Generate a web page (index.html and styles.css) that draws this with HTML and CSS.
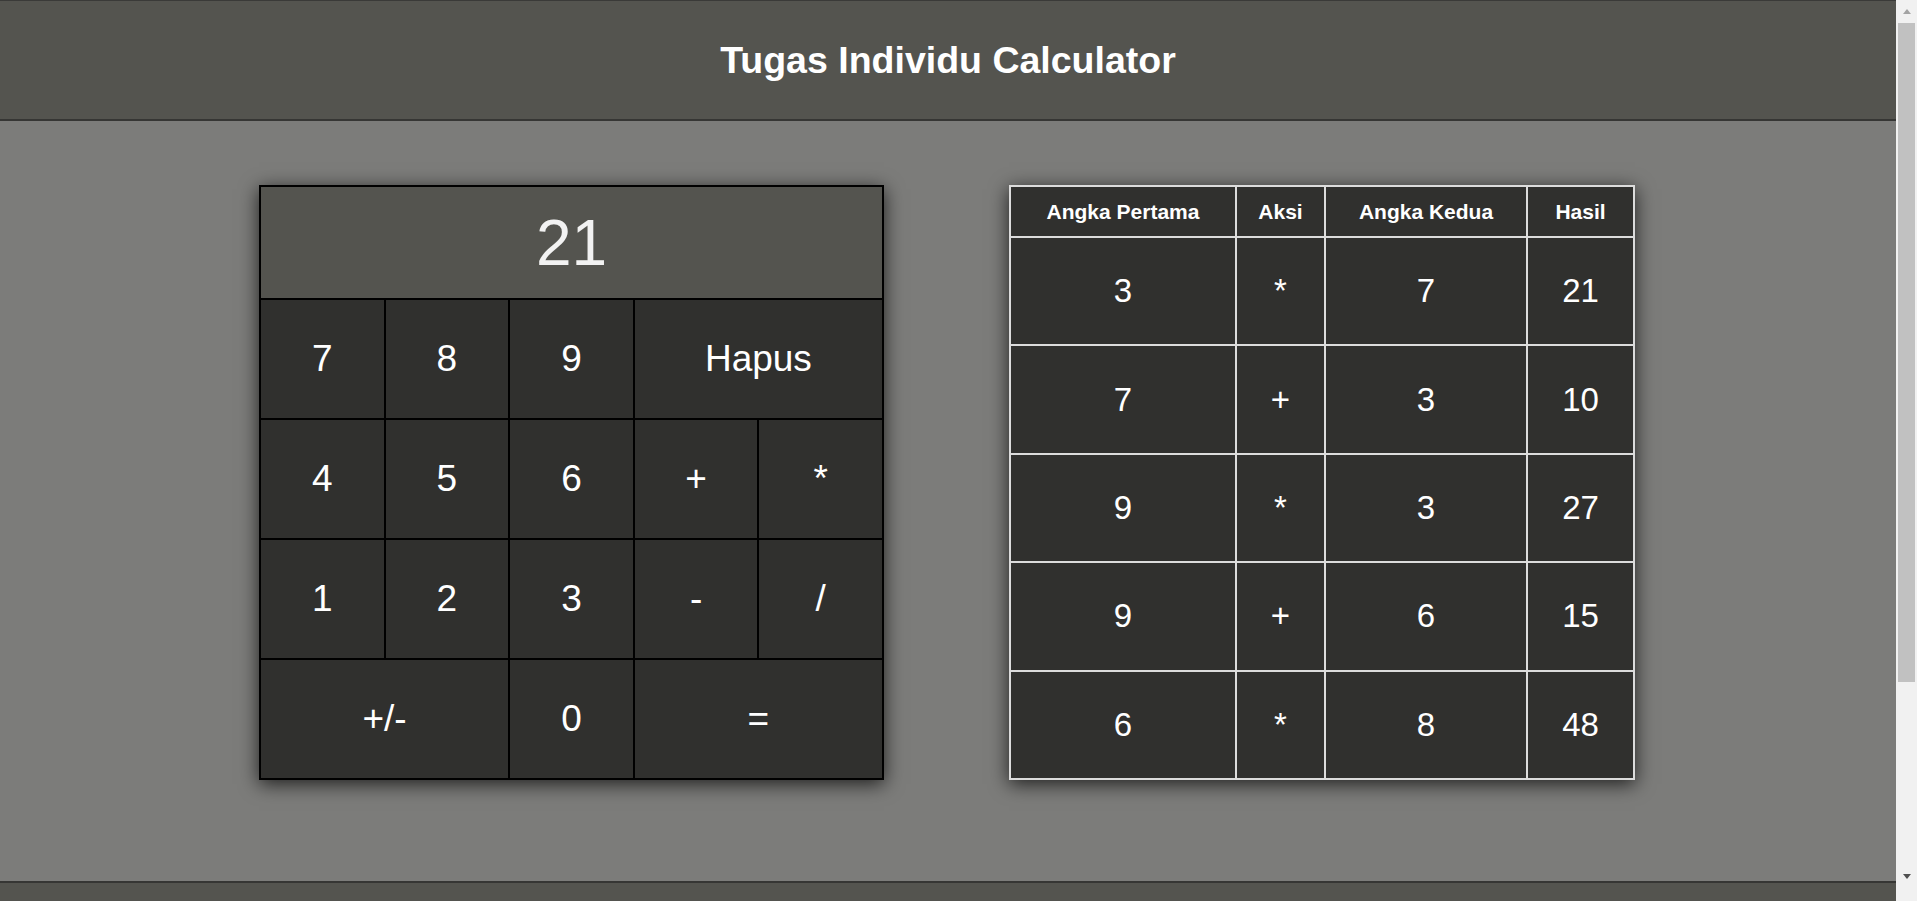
FILE: index.html
```html
<!DOCTYPE html>
<html lang="id">
<head>
<meta charset="utf-8">
<title>Tugas Individu Calculator</title>
<link rel="stylesheet" href="styles.css">
</head>
<body>
<header class="site-header">
  <h1 class="site-title">Tugas Individu Calculator</h1>
</header>
<main class="main">
  <div class="calc">
    <div class="calc-display">21</div>
    <button class="key">7</button>
    <button class="key">8</button>
    <button class="key">9</button>
    <button class="key key-wide">Hapus</button>
    <button class="key">4</button>
    <button class="key">5</button>
    <button class="key">6</button>
    <button class="key">+</button>
    <button class="key">*</button>
    <button class="key">1</button>
    <button class="key">2</button>
    <button class="key">3</button>
    <button class="key">-</button>
    <button class="key">/</button>
    <button class="key key-wide">+/-</button>
    <button class="key">0</button>
    <button class="key key-wide">=</button>
  </div>
  <table class="history">
    <colgroup>
      <col class="c1"><col class="c2"><col class="c3"><col class="c4">
    </colgroup>
    <thead>
      <tr>
        <th>Angka Pertama</th>
        <th>Aksi</th>
        <th>Angka Kedua</th>
        <th>Hasil</th>
      </tr>
    </thead>
    <tbody>
      <tr><td>3</td><td>*</td><td>7</td><td>21</td></tr>
      <tr><td>7</td><td>+</td><td>3</td><td>10</td></tr>
      <tr><td>9</td><td>*</td><td>3</td><td>27</td></tr>
      <tr><td>9</td><td>+</td><td>6</td><td>15</td></tr>
      <tr><td>6</td><td>*</td><td>8</td><td>48</td></tr>
    </tbody>
  </table>
</main>
<footer class="site-footer"></footer>
<div class="scrollbar" aria-hidden="true">
  <div class="sb-btn"><span class="sb-up"></span></div>
  <div class="sb-thumb"></div>
  <div class="sb-rest"></div>
  <div class="sb-btn"><span class="sb-down"></span></div>
</div>
</body>
</html>
```
FILE: styles.css
```css
html, body {
  margin: 0;
  padding: 0;
}
body {
  margin-right: 21px;
  font-family: "Liberation Sans", Arial, sans-serif;
  background: #7c7c7a;
  color: #fff;
}
.site-header {
  background: #54544f;
  border-top: 1px solid #3a3a38;
  border-bottom: 2px solid #363634;
  height: 118px;
  display: flex;
  align-items: center;
  justify-content: center;
}
.site-title {
  margin: 0;
  font-size: 37.5px;
  font-weight: bold;
  color: #fff;
}
.main {
  display: flex;
  align-items: flex-start;
  gap: 125px;
  padding: 64px 0 0 259px;
  height: 696px;
  background: #7c7c7a;
}
.calc {
  width: 625px;
  box-sizing: border-box;
  border: 2px solid #000;
  background: #000;
  display: grid;
  grid-template-columns: repeat(5, 1fr);
  grid-template-rows: 111px repeat(4, 118px);
  gap: 2px;
  box-shadow: 0 4px 18px rgba(0, 0, 0, 0.75);
}
.calc-display {
  grid-column: 1 / -1;
  background: #54544f;
  color: #f2f2f2;
  font-size: 64px;
  display: flex;
  align-items: center;
  justify-content: center;
}
.key {
  background: #30302e;
  color: #fff;
  border: none;
  margin: 0;
  padding: 0;
  font-family: "Liberation Sans", Arial, sans-serif;
  font-size: 37px;
  cursor: pointer;
}
.key-wide {
  grid-column: span 2;
}
.history {
  width: 624px;
  height: 595px;
  table-layout: fixed;
  border-collapse: collapse;
  background: #30302e;
  color: #fff;
  border: 2px solid #dcdcdc;
  box-shadow: 0 4px 18px rgba(0, 0, 0, 0.75);
}
.history th,
.history td {
  border: 2px solid #dcdcdc;
  text-align: center;
  padding: 0;
}
.history th {
  height: 49px;
  font-size: 21px;
  font-weight: bold;
}
.history td {
  font-size: 33px;
}
.c1 { width: 226px; }
.c2 { width: 89px; }
.c3 { width: 202px; }
.c4 { width: 107px; }
.site-footer {
  background: #54544f;
  border-top: 2px solid #363634;
  height: 300px;
}
.scrollbar {
  position: fixed;
  top: 0;
  right: 0;
  width: 21px;
  height: 100vh;
  background: #f1f1f1;
  display: flex;
  flex-direction: column;
}
.sb-btn {
  height: 22px;
  display: flex;
  align-items: center;
  justify-content: center;
}
.sb-up {
  width: 0;
  height: 0;
  border-left: 4.5px solid transparent;
  border-right: 4.5px solid transparent;
  border-bottom: 5px solid #a3a3a3;
}
.sb-down {
  width: 0;
  height: 0;
  border-left: 4.5px solid transparent;
  border-right: 4.5px solid transparent;
  border-top: 5px solid #505050;
}
.sb-thumb {
  margin: 1px 2px 0;
  height: 659px;
  background: #c1c1c1;
}
.sb-rest {
  flex: 1;
}
.scrollbar .sb-btn:last-child {
  margin-bottom: 14px;
}
```
